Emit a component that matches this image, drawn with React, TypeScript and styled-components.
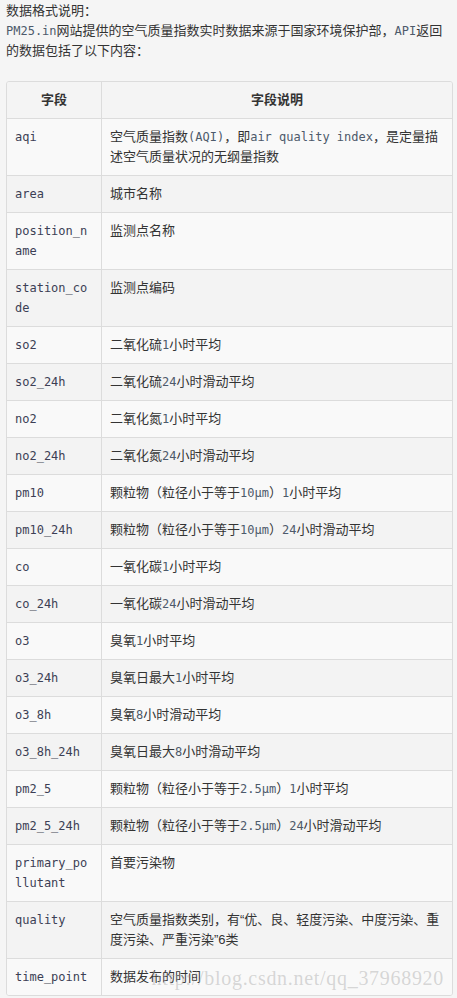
import styled, { createGlobalStyle } from "styled-components";

type Field = { name: string; desc: string };

// 描述里用反引号包起来的部分按等宽代码显示
const fields: Field[] = [
  { name: "aqi", desc: "空气质量指数`(AQI)`，即`air quality index`，是定量描述空气质量状况的无纲量指数" },
  { name: "area", desc: "城市名称" },
  { name: "position_name", desc: "监测点名称" },
  { name: "station_code", desc: "监测点编码" },
  { name: "so2", desc: "二氧化硫`1`小时平均" },
  { name: "so2_24h", desc: "二氧化硫`24`小时滑动平均" },
  { name: "no2", desc: "二氧化氮`1`小时平均" },
  { name: "no2_24h", desc: "二氧化氮`24`小时滑动平均" },
  { name: "pm10", desc: "颗粒物（粒径小于等于`10μm`）`1`小时平均" },
  { name: "pm10_24h", desc: "颗粒物（粒径小于等于`10μm`）`24`小时滑动平均" },
  { name: "co", desc: "一氧化碳`1`小时平均" },
  { name: "co_24h", desc: "一氧化碳`24`小时滑动平均" },
  { name: "o3", desc: "臭氧`1`小时平均" },
  { name: "o3_24h", desc: "臭氧日最大`1`小时平均" },
  { name: "o3_8h", desc: "臭氧`8`小时滑动平均" },
  { name: "o3_8h_24h", desc: "臭氧日最大`8`小时滑动平均" },
  { name: "pm2_5", desc: "颗粒物（粒径小于等于`2.5μm`）`1`小时平均" },
  { name: "pm2_5_24h", desc: "颗粒物（粒径小于等于`2.5μm`）`24`小时滑动平均" },
  { name: "primary_pollutant", desc: "首要污染物" },
  { name: "quality", desc: "空气质量指数类别，有“优、良、轻度污染、中度污染、重度污染、严重污染”6类" },
  { name: "time_point", desc: "数据发布的时间" },
];

const renderDesc = (desc: string) =>
  desc.split("`").map((part, i) => (i % 2 === 1 ? <Code key={i}>{part}</Code> : <span key={i}>{part}</span>));

const App = () => {
  return (
    <Page>
      <GlobalStyle />
      <Intro>
        数据格式说明：
        <br />
        <Code>PM25.in</Code>网站提供的空气质量指数实时数据来源于国家环境保护部，<Code>API</Code>
        返回的数据包括了以下内容：
      </Intro>
      <TableWrap>
        <Table>
          <thead>
            <tr>
              <Th className="name-col">字段</Th>
              <Th>字段说明</Th>
            </tr>
          </thead>
          <tbody>
            {fields.map((f, idx) => (
              <Row key={f.name} $odd={idx % 2 === 0}>
                <NameCell>{f.name}</NameCell>
                <DescCell>{renderDesc(f.desc)}</DescCell>
              </Row>
            ))}
          </tbody>
        </Table>
        <Watermark>http://blog.csdn.net/qq_37968920</Watermark>
      </TableWrap>
    </Page>
  );
};

export default App;

const GlobalStyle = createGlobalStyle`
  html, body {
    margin: 0;
    padding: 0;
    background: #f5f5f5;
  }
`;

const Page = styled.div`
  padding: 0 4px 0 6px;
  font-family: "Liberation Sans", "Noto Sans CJK SC", sans-serif;
  font-size: 13px;
  line-height: 20px;
  color: #333;
`;

const Intro = styled.div`
  padding-top: 1px;
  margin-bottom: 20px;
`;

const Code = styled.code`
  font-family: "DejaVu Sans Mono", "Liberation Mono", monospace;
  font-size: 12px;
  line-height: 1;
  color: #4d5a6b;
`;

const TableWrap = styled.div`
  position: relative;
`;

const Table = styled.table`
  width: 100%;
  table-layout: fixed;
  border-collapse: separate;
  border-spacing: 0;
  border: 1px solid #dcdcdc;
  border-radius: 3px;
  overflow: hidden;

  .name-col {
    width: 95px;
  }
`;

const Th = styled.th`
  box-sizing: border-box;
  padding: 8px;
  font-weight: bold;
  text-align: center;
  background: #f4f4f4;
  border-bottom: 1px solid #dcdcdc;

  &:first-child {
    border-right: 1px solid #dcdcdc;
  }
`;

const Row = styled.tr<{ $odd: boolean }>`
  background: ${(p) => (p.$odd ? "#f9f9f9" : "#f3f3f3")};

  &:last-child td {
    border-bottom: none;
  }
`;

const NameCell = styled.td`
  box-sizing: border-box;
  padding: 8px;
  vertical-align: top;
  border-right: 1px solid #dcdcdc;
  border-bottom: 1px solid #dcdcdc;
  font-family: "DejaVu Sans Mono", "Liberation Mono", monospace;
  font-size: 12px;
  color: #3c3f55;
  word-break: break-all;
`;

const DescCell = styled.td`
  padding: 8px;
  vertical-align: top;
  border-bottom: 1px solid #dcdcdc;
`;

const Watermark = styled.div`
  position: absolute;
  right: 9px;
  bottom: 6px;
  font-family: "Liberation Serif", serif;
  font-size: 20px;
  line-height: 24px;
  letter-spacing: 0.7px;
  color: rgba(170, 170, 170, 0.45);
  white-space: nowrap;
  pointer-events: none;
`;
